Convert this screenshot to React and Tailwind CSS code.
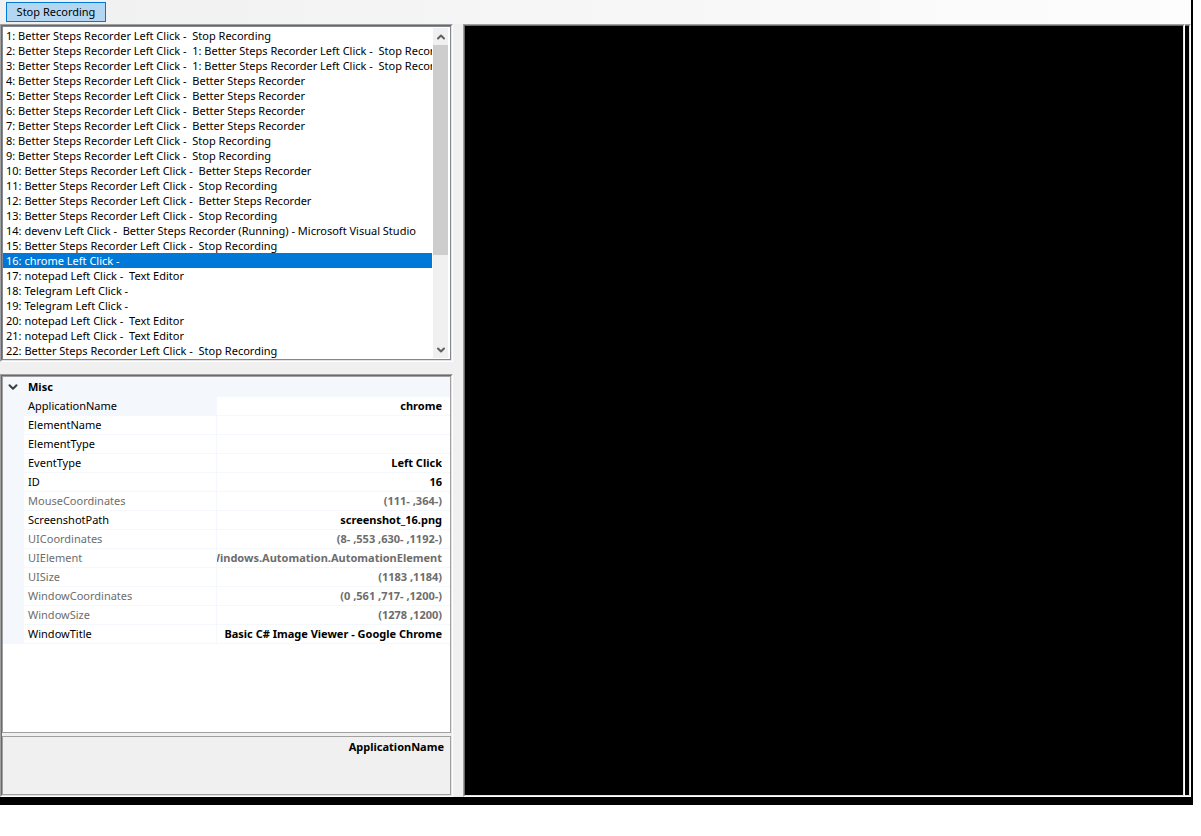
import { ChevronDown, ChevronUp } from "lucide-react";

const steps = [
  "Better Steps Recorder Left Click -  Stop Recording",
  "Better Steps Recorder Left Click -  1: Better Steps Recorder Left Click -  Stop Recording",
  "Better Steps Recorder Left Click -  1: Better Steps Recorder Left Click -  Stop Recording",
  "Better Steps Recorder Left Click -  Better Steps Recorder",
  "Better Steps Recorder Left Click -  Better Steps Recorder",
  "Better Steps Recorder Left Click -  Better Steps Recorder",
  "Better Steps Recorder Left Click -  Better Steps Recorder",
  "Better Steps Recorder Left Click -  Stop Recording",
  "Better Steps Recorder Left Click -  Stop Recording",
  "Better Steps Recorder Left Click -  Better Steps Recorder",
  "Better Steps Recorder Left Click -  Stop Recording",
  "Better Steps Recorder Left Click -  Better Steps Recorder",
  "Better Steps Recorder Left Click -  Stop Recording",
  "devenv Left Click -  Better Steps Recorder (Running) - Microsoft Visual Studio",
  "Better Steps Recorder Left Click -  Stop Recording",
  "chrome Left Click - ",
  "notepad Left Click -  Text Editor",
  "Telegram Left Click - ",
  "Telegram Left Click - ",
  "notepad Left Click -  Text Editor",
  "notepad Left Click -  Text Editor",
  "Better Steps Recorder Left Click -  Stop Recording",
];

const properties = [
  { name: "ApplicationName", value: "chrome", selected: true },
  { name: "ElementName", value: "" },
  { name: "ElementType", value: "" },
  { name: "EventType", value: "Left Click" },
  { name: "ID", value: "16" },
  { name: "MouseCoordinates", value: "(111- ,364-)", readOnly: true },
  { name: "ScreenshotPath", value: "screenshot_16.png" },
  { name: "UICoordinates", value: "(8- ,553 ,630- ,1192-)", readOnly: true },
  { name: "UIElement", value: "Windows.Automation.AutomationElement", readOnly: true },
  { name: "UISize", value: "(1183 ,1184)", readOnly: true },
  { name: "WindowCoordinates", value: "(0 ,561 ,717- ,1200-)", readOnly: true },
  { name: "WindowSize", value: "(1278 ,1200)", readOnly: true },
  { name: "WindowTitle", value: "Basic C# Image Viewer - Google Chrome" },
];

const SELECTED_STEP = 16;

function Sunken({ className = "", children }) {
  return (
    <div className={`flex border border-t-[#a0a0a0] border-l-[#a0a0a0] border-r-white border-b-white ${className}`}>
      <div className="flex min-w-0 flex-1 flex-col border border-t-[#696969] border-l-[#696969] border-r-[#e3e3e3] border-b-[#e3e3e3]">
        {children}
      </div>
    </div>
  );
}

function StepList() {
  return (
    <Sunken>
      <div className="flex border border-[#828790] bg-white py-px pr-0.5">
        <ul role="listbox" aria-label="Recorded steps" className="min-w-0 flex-1 overflow-hidden pr-px">
          {steps.map((step, i) => {
            const selected = i + 1 === SELECTED_STEP;
            return (
              <li
                key={i}
                role="option"
                aria-selected={selected}
                className={`h-[15px] overflow-hidden pl-[3px] leading-[15px] whitespace-pre ${selected ? "bg-[#0078d7] text-white" : ""}`}
              >
                {`${i + 1}: ${step}`}
              </li>
            );
          })}
        </ul>
        <div className="flex w-[15px] flex-col bg-[#f0f0f0]">
          <button type="button" aria-label="Scroll up" className="flex h-[17px] items-center justify-center text-[#606060]">
            <ChevronUp className="size-3" strokeWidth={4} />
          </button>
          <div className="h-[210px] bg-[#cdcdcd]" />
          <button type="button" aria-label="Scroll down" className="mt-auto flex h-[17px] items-center justify-center text-[#606060]">
            <ChevronDown className="size-3" strokeWidth={4} />
          </button>
        </div>
      </div>
    </Sunken>
  );
}

function PropertyGrid() {
  return (
    <Sunken className="flex-1">
      <div className="flex-1 border border-[#a0a0a0] bg-white">
        <table className="w-full table-fixed border-separate border-spacing-0">
          <colgroup>
            <col className="w-[21px]" />
            <col className="w-[193px]" />
            <col />
          </colgroup>
          <thead>
            <tr className="h-5 bg-[#f4f7fc]">
              <th className="p-0">
                <button type="button" aria-label="Collapse Misc" className="flex h-5 w-full items-center justify-center pr-0.5 text-[#404040]">
                  <ChevronDown className="size-3.5" strokeWidth={3.5} />
                </button>
              </th>
              <th colSpan={2} className="p-0 pl-1 text-left leading-[18px] font-bold">Misc</th>
            </tr>
          </thead>
          <tbody>
            {properties.map((p) => (
              <tr key={p.name} className={p.readOnly ? "text-[#6d6d6d]" : ""}>
                <td className="bg-[#f4f7fc] p-0" />
                <th
                  scope="row"
                  className={`h-[19px] border-r border-b border-[#f4f7fc] p-0 pl-1 text-left leading-[18px] font-normal ${p.selected ? "bg-[#f4f7fc]" : ""}`}
                >
                  {p.name}
                </th>
                <td className="border-b border-[#f4f7fc] p-0 pr-2">
                  <div className="flex h-[18px] justify-end overflow-hidden leading-[18px] font-bold whitespace-pre">{p.value}</div>
                </td>
              </tr>
            ))}
          </tbody>
        </table>
      </div>
      <div className="mt-[3px] h-[59px] border border-[#a0a0a0] px-1.5 pt-px text-right leading-[18px] font-bold">
        ApplicationName
      </div>
    </Sunken>
  );
}

export default function App() {
  return (
    <div className="h-screen bg-white pr-2 pb-[31px] font-['Noto_Sans','Open_Sans',sans-serif] text-[11px] text-black">
      <div className="flex h-full flex-col border-r-2 border-b-8 border-black bg-[#f0f0f0]">
        <header className="flex h-6 bg-linear-to-r from-[#f0f0f0] to-[#fdfdfd] pt-0.5 pl-1.5">
          <button type="button" className="h-5 w-[100px] border border-[#0078d7] bg-[#b3d7f3] leading-[18px]">
            Stop Recording
          </button>
        </header>
        <main className="flex min-h-0 flex-1">
          <div className="flex w-[453px] shrink-0 flex-col gap-3">
            <StepList />
            <PropertyGrid />
          </div>
          <Sunken className="ml-2.5 min-w-0 flex-1">
            <div className="flex-1 bg-black" />
          </Sunken>
          <div className="flex w-1.5 border-t border-r border-b border-t-[#a0a0a0] border-r-white border-b-white">
            <div className="flex-1 border-t border-r border-b border-t-[#696969] border-r-[#e3e3e3] border-b-[#e3e3e3] bg-black" />
          </div>
        </main>
      </div>
    </div>
  );
}
